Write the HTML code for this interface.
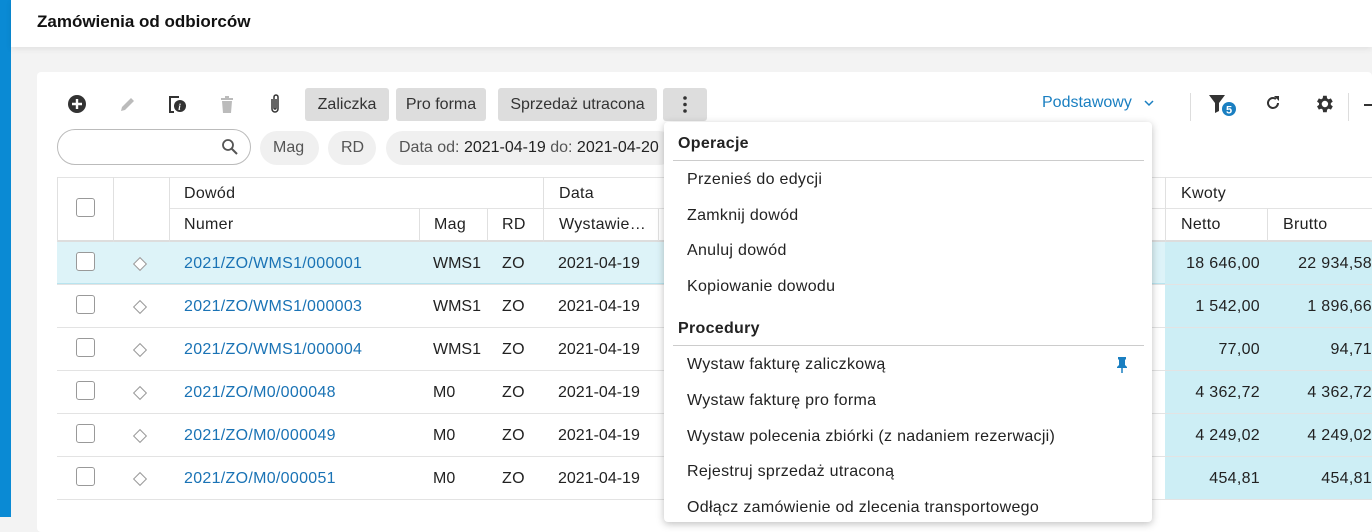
<!DOCTYPE html><html><head><style>
*{box-sizing:border-box;margin:0;padding:0}
body{width:1372px;height:517px;overflow:hidden;background:#f3f3f3;font-family:"Liberation Sans",sans-serif;font-size:16px;letter-spacing:0.3px;color:#222;position:relative}
.abs{position:absolute}
.bar{left:0;top:0;width:11px;height:517px;background:#0a8ad4}
.hdr{left:11px;top:0;right:0;height:47px;background:#fff;box-shadow:0 2px 6px rgba(0,0,0,.08)}
.hdr h1{position:absolute;left:26px;top:12px;font-size:17px;font-weight:bold;color:#111;letter-spacing:0}
.card{left:37px;top:72px;right:0;height:460px;background:#fff;border-radius:4px}
.btn{top:88px;height:33px;background:#ddd;border-radius:3px;line-height:33px;padding:0;text-align:center;white-space:nowrap;letter-spacing:0;color:#333}
.chip{top:131px;height:34px;background:#f0f0f0;border-radius:17px;line-height:34px;padding:0 13px;color:#555;white-space:nowrap;letter-spacing:0}
.row{left:57px;width:1315px;height:43px;border-bottom:1px solid #e3e3e3}
.c{position:absolute;line-height:43px;white-space:nowrap}
.cb{width:19px;height:19px;border:1px solid #999;border-radius:3px;background:#fff;position:absolute}
.dia{position:absolute;width:10px;height:10px;border:1px solid #999;transform:rotate(45deg);background:#fff}
.lnk{color:#1a73b5}
.menu{left:664px;top:122px;width:488px;height:400px;background:#fff;border-radius:4px;box-shadow:0 2px 8px rgba(0,0,0,.25)}
.mi{position:absolute;left:23px;color:#222;white-space:nowrap}
.mh{position:absolute;left:14px;font-weight:bold;color:#222}
.ml{position:absolute;left:9px;width:471px;height:1px;background:#ccc}
.th{position:absolute;color:#222;white-space:nowrap}
.vl{position:absolute;width:1px;background:#e0e0e0}
</style></head><body>
<div class="abs bar"></div>
<div class="abs hdr"><h1>Zamówienia od odbiorców</h1></div>
<div class="abs card"></div>
<svg class="abs" style="left:67px;top:94px" width="20" height="20" viewBox="0 0 20 20"><circle cx="10" cy="10" r="9" fill="#333"/><path d="M10 5v10M5 10h10" stroke="#fff" stroke-width="2.4"/></svg>
<svg class="abs" style="left:118px;top:94px" width="20" height="20" viewBox="0 0 20 20"><path d="M3 17l1-4 9-9 3 3-9 9z" fill="#bbb"/></svg>
<svg class="abs" style="left:166px;top:93px" width="22" height="22" viewBox="0 0 22 22"><path d="M3 3h10v2H5v13h3v2H3z" fill="#333"/><circle cx="14" cy="13" r="6" fill="#333"/><text x="12.3" y="17" font-size="9" font-weight="bold" fill="#fff" font-family="Liberation Serif" font-style="italic">i</text></svg>
<svg class="abs" style="left:218px;top:94px" width="18" height="20" viewBox="0 0 18 20"><path d="M3 4h12v2H3zM7 2h4v2H7zM4 7h10l-1 12H5z" fill="#bbb"/></svg>
<svg class="abs" style="left:266px;top:93px" width="18" height="22" viewBox="0 0 18 22"><path d="M6 6v10a3 3 0 0 0 6 0V4a2 2 0 0 0-4 0v11a1 1 0 0 0 2 0V6" stroke="#333" stroke-width="1.5" fill="none"/></svg>
<div class="abs btn" style="left:305px;width:84px">Zaliczka</div>
<div class="abs btn" style="left:396px;width:90px">Pro forma</div>
<div class="abs btn" style="left:498px;width:159px">Sprzedaż utracona</div>
<div class="abs btn" style="left:663px;width:44px"><svg width="44" height="33"><circle cx="22" cy="10" r="1.8" fill="#333"/><circle cx="22" cy="16.5" r="1.8" fill="#333"/><circle cx="22" cy="23" r="1.8" fill="#333"/></svg></div>
<div class="abs" style="left:1042px;top:94px;color:#1a7fc1;font-size:16px;letter-spacing:0">Podstawowy</div>
<svg class="abs" style="left:1143px;top:98px" width="12" height="10"><path d="M2 3l4 4 4-4" stroke="#1a7fc1" stroke-width="1.5" fill="none"/></svg>
<div class="abs" style="left:1190px;top:93px;width:1px;height:28px;background:#ddd"></div>
<div class="abs" style="left:1348px;top:93px;width:1px;height:28px;background:#ddd"></div>
<svg class="abs" style="left:1207px;top:93px" width="32" height="26"><path d="M2 2h16l-6 8v8l-4 2V10z" fill="#333"/><circle cx="22" cy="16" r="7" fill="#1a7fc1"/><text x="19" y="20.5" font-size="11" font-weight="bold" fill="#fff" font-family="Liberation Sans">5</text></svg>
<svg class="abs" style="left:1264px;top:94px" width="18" height="18"><path d="M14 9a5 5 0 1 1-2-4" stroke="#333" stroke-width="2" fill="none"/><path d="M10 2h5v5z" fill="#333"/></svg>
<svg class="abs" style="left:1313px;top:93px" width="22" height="22" viewBox="0 0 24 24"><path fill="#333" d="M19.4 13a7.5 7.5 0 0 0 0-2l2.1-1.6-2-3.5-2.5 1a7 7 0 0 0-1.7-1L15 3h-4l-.4 2.9a7 7 0 0 0-1.7 1l-2.5-1-2 3.5L6.6 11a7.5 7.5 0 0 0 0 2l-2.2 1.6 2 3.5 2.5-1a7 7 0 0 0 1.7 1L11 21h4l.4-2.9a7 7 0 0 0 1.7-1l2.5 1 2-3.5zM13 15.5a3.5 3.5 0 1 1 0-7 3.5 3.5 0 0 1 0 7z"/></svg>
<div class="abs" style="left:1364px;top:104px;width:8px;height:2px;background:#333"></div>
<div class="abs" style="left:57px;top:129px;width:194px;height:36px;border:1px solid #bbb;border-radius:18px;background:#fff"></div>
<svg class="abs" style="left:221px;top:138px" width="18" height="18"><circle cx="7" cy="7" r="5" stroke="#555" stroke-width="1.8" fill="none"/><path d="M11 11l5 5" stroke="#555" stroke-width="2"/></svg>
<div class="abs chip" style="left:260px;width:59px">Mag</div>
<div class="abs chip" style="left:328px;width:48px">RD</div>
<div class="abs chip" style="left:386px;width:290px;overflow:hidden">Data od: <span style="color:#222">2021-04-19</span> do: <span style="color:#222">2021-04-20</span></div>
<div class="abs" style="left:57px;top:177px;width:1315px;height:65px;border-top:1px solid #e3e3e3;border-bottom:2px solid #ddd"></div>
<div class="abs" style="left:169px;top:208px;width:1203px;height:1px;background:#e3e3e3"></div>
<div class="vl" style="left:57px;top:177px;height:65px"></div>
<div class="vl" style="left:113px;top:177px;height:65px"></div>
<div class="vl" style="left:169px;top:177px;height:65px"></div>
<div class="vl" style="left:419px;top:209px;height:32px"></div>
<div class="vl" style="left:487px;top:209px;height:32px"></div>
<div class="vl" style="left:543px;top:177px;height:65px"></div>
<div class="vl" style="left:658px;top:209px;height:32px"></div>
<div class="vl" style="left:1165px;top:177px;height:65px"></div>
<div class="vl" style="left:1267px;top:209px;height:32px"></div>
<div class="cb" style="left:76px;top:198px"></div>
<div class="th" style="left:184px;top:185px">Dowód</div>
<div class="th" style="left:559px;top:185px">Data</div>
<div class="th" style="left:1181px;top:185px">Kwoty</div>
<div class="th" style="left:184px;top:216px">Numer</div>
<div class="th" style="left:434px;top:216px">Mag</div>
<div class="th" style="left:502px;top:216px">RD</div>
<div class="th" style="left:559px;top:216px">Wystawie…</div>
<div class="th" style="left:1181px;top:216px">Netto</div>
<div class="th" style="left:1283px;top:216px">Brutto</div>
<div class="abs" style="left:57px;top:242px;width:1315px;height:43px;background:#ddf3f8;border-bottom:2px solid #b8e4ef"></div>
<div class="abs" style="left:1165px;top:242px;width:207px;height:258px;background:#cdeef5"></div>
<div id="rows"></div>
<script>
var d=[["2021/ZO/WMS1/000001","WMS1","18 646,00","22 934,58"],["2021/ZO/WMS1/000003","WMS1","1 542,00","1 896,66"],["2021/ZO/WMS1/000004","WMS1","77,00","94,71"],["2021/ZO/M0/000048","M0","4 362,72","4 362,72"],["2021/ZO/M0/000049","M0","4 249,02","4 249,02"],["2021/ZO/M0/000051","M0","454,81","454,81"]];
var h="";d.forEach(function(r,i){var t=242+i*43;
h+='<div class="abs row" style="top:'+t+'px"></div>';
h+='<div class="cb" style="left:76px;top:'+(t+10)+'px"></div><div class="dia" style="left:135px;top:'+(t+17)+'px"></div>';
h+='<div class="c lnk" style="left:184px;top:'+t+'px">'+r[0]+'</div><div class="c" style="left:433px;top:'+t+'px;letter-spacing:0">'+r[1]+'</div><div class="c" style="left:502px;top:'+t+'px">ZO</div><div class="c" style="left:558px;top:'+t+'px;letter-spacing:0">2021-04-19</div>';
h+='<div class="c" style="right:112px;top:'+t+'px">'+r[2]+'</div><div class="c" style="right:0;top:'+t+'px">'+r[3]+'</div>';});
document.getElementById("rows").innerHTML=h;
</script>
<div class="abs menu">
<div class="mh" style="top:13px">Operacje</div>
<div class="ml" style="top:38px"></div>
<div class="mi" style="top:49px">Przenieś do edycji</div>
<div class="mi" style="top:85px">Zamknij dowód</div>
<div class="mi" style="top:120px">Anuluj dowód</div>
<div class="mi" style="top:156px">Kopiowanie dowodu</div>
<div class="mh" style="top:198px">Procedury</div>
<div class="ml" style="top:223px"></div>
<div class="mi" style="top:234px">Wystaw fakturę zaliczkową</div>
<svg style="position:absolute;left:451px;top:234px" width="14" height="18"><path d="M3 1h8v2l-1 1v5l2 2v1H2v-1l2-2V4L3 3z" fill="#1a7fc1"/><path d="M7 12v5" stroke="#1a7fc1" stroke-width="1.5"/></svg>
<div class="mi" style="top:270px">Wystaw fakturę pro forma</div>
<div class="mi" style="top:306px">Wystaw polecenia zbiórki (z nadaniem rezerwacji)</div>
<div class="mi" style="top:341px">Rejestruj sprzedaż utraconą</div>
<div class="mi" style="top:377px">Odłącz zamówienie od zlecenia transportowego</div>
</div>
</body></html>
